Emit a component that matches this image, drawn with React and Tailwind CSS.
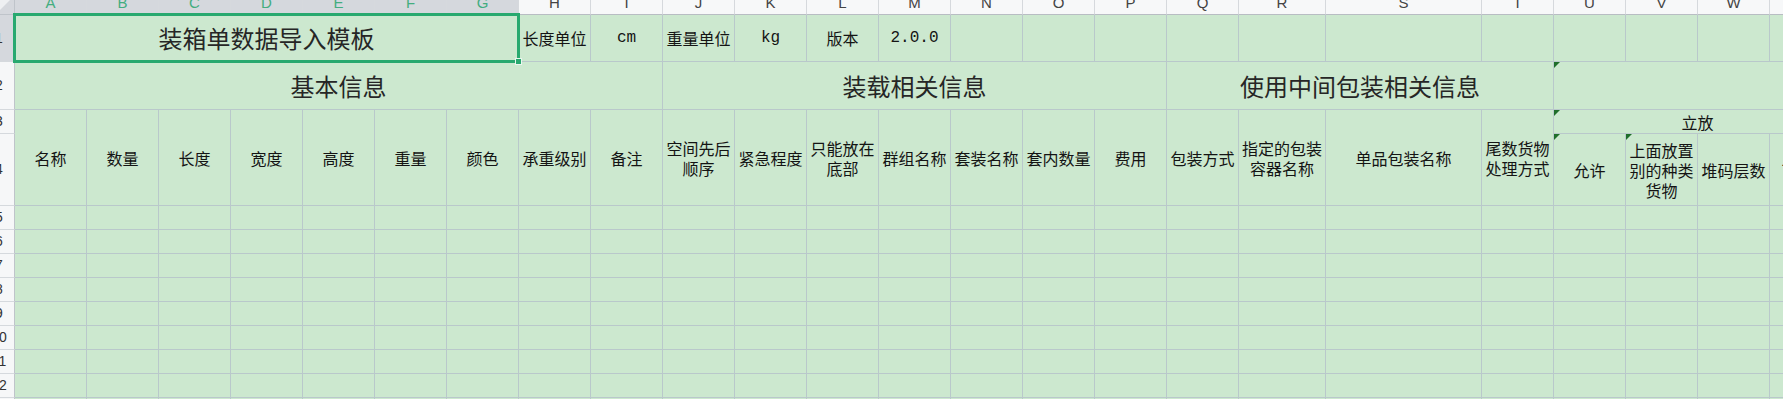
import React from 'react';

const COLS = ['A','B','C','D','E','F','G','H','I','J','K','L','M','N','O','P','Q','R','S','T','U','V','W','X'];

const LINE = 'border-r border-b border-[#b9c8cb]';

const headerLabels = [
  '名称', '数量', '长度', '宽度', '高度', '重量', '颜色', '承重级别', '备注',
  '空间先后顺序', '紧急程度', '只能放在底部', '群组名称', '套装名称', '套内数量',
  '费用', '包装方式', '指定的包装容器名称', '单品包装名称', '尾数货物处理方式'
];

const row1 = { H: '长度单位', I: 'cm', J: '重量单位', K: 'kg', L: '版本', M: '2.0.0' };
const mono = ['I', 'K', 'M'];

// little dark-green triangle WPS puts in the corner of a cell
const Flag = () => (
  <span className="absolute top-0 left-0 w-0 h-0 border-t-[6px] border-r-[6px] border-t-[#1f6e2b] border-r-transparent" />
);

const RowHead = ({ n, selected }) => (
  <div className={`relative overflow-hidden border-r border-b border-r-[#bfc4ca] border-b-[#d5d9dd] ${selected ? 'bg-[#d5d8dd]' : 'bg-[#f6f7f8]'}`}>
    <div className="absolute top-0 bottom-0 left-[-16px] w-[30px] flex items-center justify-center text-[14px] text-[#333] font-['Liberation_Sans',sans-serif]">
      {n}
    </div>
  </div>
);

const Cell = ({ children, className = '', flag }) => (
  <div className={`relative flex items-center justify-center text-center px-[3px] text-[16px] leading-[20px] text-[#141414] ${LINE} ${className}`}>
    {flag && <Flag />}
    {children}
  </div>
);

export default function App() {
  const dataRows = [5, 6, 7, 8, 9, 10, 11, 12, 13];

  return (
    <div className="relative w-[1783px] h-[399px] overflow-hidden bg-[#cce8cf] font-['Noto_Sans_CJK_SC',sans-serif]">
      <div className="grid grid-cols-[15px_repeat(17,72px)_87px_156px_repeat(5,72px)] grid-rows-[15px_47px_48px_24px_72px_repeat(9,24px)] w-max">

        {/* column letters, only their lower part shows */}
        <div className="bg-[#d5d8dd] border-r border-b border-[#bfc4ca] overflow-hidden">
          <svg width="14" height="14" viewBox="0 0 14 14">
            <polygon points="0,0 10,0 0,10" fill="#eef0f2" />
          </svg>
        </div>
        {COLS.map((c, i) => (
          <div
            key={c}
            className={`overflow-hidden flex justify-center items-start border-r border-b border-r-[#d6d9dd] border-b-[#b8bdc3] font-['Liberation_Sans',sans-serif] text-[15px] ${i < 7 ? 'bg-[#d5d8dd] text-[#43ad7f]' : 'bg-[#f7f8f9] text-[#444]'}`}
          >
            <span className="block leading-[15px] -mt-[5px]">{c}</span>
          </div>
        ))}

        {/* row 1 */}
        <RowHead n={1} selected />
        <Cell className="col-span-7 text-[24px] text-[#262626]">装箱单数据导入模板</Cell>
        {COLS.slice(7).map((c) => (
          <Cell key={c} className={mono.includes(c) ? "font-['Liberation_Mono','Noto_Sans_CJK_SC',monospace] text-[13px] text-[#222]" : ''}>
            {row1[c] || ''}
          </Cell>
        ))}

        {/* row 2 */}
        <RowHead n={2} />
        <Cell className="col-span-9 text-[24px] text-[#262626]">基本信息</Cell>
        <Cell className="col-span-7 text-[24px] text-[#262626]">装载相关信息</Cell>
        <Cell className="col-span-4 text-[24px] text-[#262626]">使用中间包装相关信息</Cell>
        <Cell className="col-span-4" flag />

        {/* rows 3-4 */}
        <RowHead n={3} />
        {headerLabels.map((t) => (
          <Cell key={t} className="row-span-2">{t}</Cell>
        ))}
        <Cell className="col-span-4" flag>立放</Cell>

        <RowHead n={4} />
        <Cell flag>允许</Cell>
        <Cell flag>上面放置别的种类货物</Cell>
        <Cell>堆码层数</Cell>
        <Cell>可倒放</Cell>

        {/* empty data rows */}
        {dataRows.map((r) => (
          <React.Fragment key={r}>
            <RowHead n={r} />
            {COLS.map((c) => (
              <Cell key={c} />
            ))}
          </React.Fragment>
        ))}
      </div>

      {/* selection frame on A1:G1 */}
      <div className="absolute left-[13px] top-[13px] w-[507px] h-[50px] border-[3px] border-[#28a96f] pointer-events-none" />
      <div className="absolute left-[515px] top-[58px] w-[7px] h-[7px] bg-[#28a96f] border border-[#e9f6ee]" />
    </div>
  );
}
